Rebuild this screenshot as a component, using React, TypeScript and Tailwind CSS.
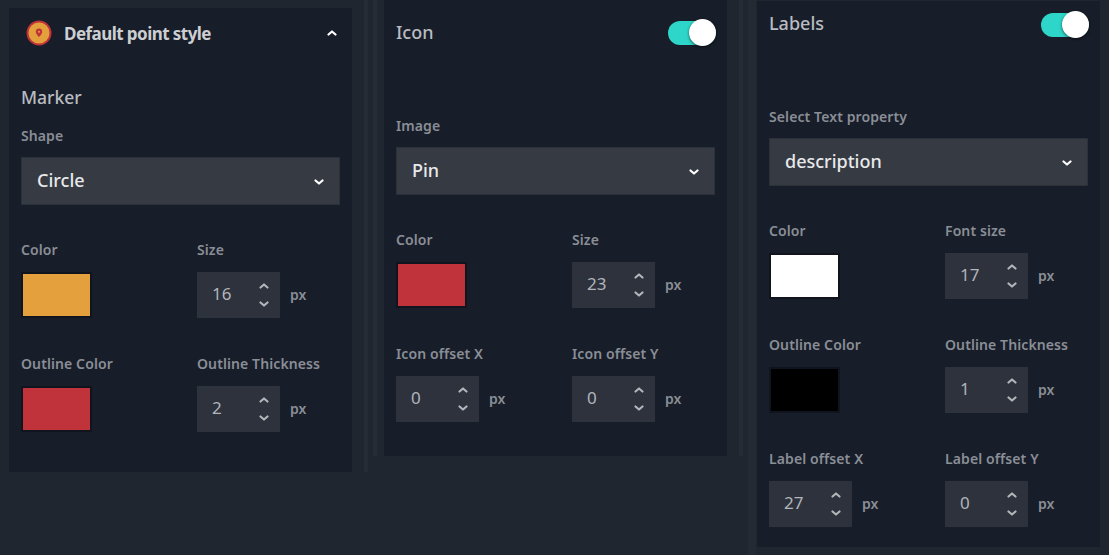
import React from "react";

const F = { fontFamily: '"Noto Sans", "Open Sans", sans-serif' };

function Chevron({ up, className }: { up?: boolean; className?: string }) {
  return (
    <svg viewBox="0 0 10 6" className={className} fill="none" stroke="currentColor" strokeWidth="2.2" strokeLinecap="round" strokeLinejoin="round">
      <path d={up ? "M1.5 4.5 5 1.5l3.5 3" : "M1.5 1.5 5 4.5l3.5-3"} />
    </svg>
  );
}

function Label({ children }: { children: React.ReactNode }) {
  return <div className="text-[14px] leading-[18px] font-semibold text-[#8a8e96] whitespace-nowrap tracking-[0.1px]">{children}</div>;
}

function Select({ value }: { value: string }) {
  return (
    <div className="mt-[12px] h-[48px] flex items-center justify-between pl-[15px] pr-[15px] bg-[#363a43] border border-[#2c3039] text-[#e8e9eb] text-[18px] font-medium">
      <span className="mb-[2px]">{value}</span>
      <Chevron className="w-[10px] h-[6px] mt-[2px] text-white" />
    </div>
  );
}

function Swatch({ color }: { color: string }) {
  return <div className="mt-[13px] w-[71px] h-[46px] border-[2px] border-[#10141e]" style={{ backgroundColor: color }} />;
}

function NumberInput({ value }: { value: string }) {
  return (
    <div className="mt-[13px] flex items-center">
      <div className="w-[83px] h-[46px] bg-[#2d323d] flex items-center justify-between pl-[15px] pr-[11px]">
        <span className="text-[#b2b5ba] text-[17px] mb-[2px]">{value}</span>
        <div className="flex flex-col gap-[12px] text-[#b2b5ba]">
          <Chevron up className="w-[10px] h-[6px]" />
          <Chevron className="w-[10px] h-[6px]" />
        </div>
      </div>
      <span className="ml-[10px] mb-[2px] text-[14px] font-semibold text-[#8a8e96]">px</span>
    </div>
  );
}

function Toggle() {
  return (
    <div className="relative w-[48px] h-[24px] mt-[2px] rounded-full bg-[#2dd6c8]">
      <div className="absolute right-0 top-[-2px] w-[27px] h-[27px] rounded-full bg-white shadow-[0_1px_3px_rgba(0,0,0,0.6)]" />
    </div>
  );
}

function ColorRow({ a, b, left, right }: { a: string; b: string; left: React.ReactNode; right: React.ReactNode }) {
  return (
    <div className="flex">
      <div className="w-[176px]">
        <Label>{a}</Label>
        {left}
      </div>
      <div>
        <Label>{b}</Label>
        {right}
      </div>
    </div>
  );
}

function MarkerIcon() {
  return (
    <svg viewBox="0 0 26 26" className="w-[26px] h-[26px]">
      <circle cx="13" cy="13" r="11.5" fill="#e4a03c" stroke="#c0333a" strokeWidth="2" />
      <path d="M13 8.5a3.2 3.2 0 0 0-3.2 3.2c0 2.3 3.2 5.3 3.2 5.3s3.2-3 3.2-5.3A3.2 3.2 0 0 0 13 8.5z" fill="#c0333a" />
      <circle cx="13" cy="11.7" r="1" fill="#e4a03c" />
    </svg>
  );
}

export default function App() {
  return (
    <div className="w-[1109px] h-[555px] bg-[#1f2630] overflow-hidden flex items-start" style={F}>
      <div className="ml-[9px] mt-[8px] w-[343px] h-[464px] bg-[#171d29] shrink-0">
        <div className="h-[50px] flex items-center pl-[17px] pr-[15px]">
          <MarkerIcon />
          <span className="ml-[12px] mt-[1px] text-[17px] font-bold text-[#ccced2] tracking-[-0.55px]">Default point style</span>
          <Chevron up className="ml-auto w-[10px] h-[6px] text-white" />
        </div>
        <div className="px-[12px] pt-[26px]">
          <div className="text-[17.5px] leading-[26px] font-medium text-[#b9bcc1]">Marker</div>
          <div className="mt-[17px]"><Label>Shape</Label></div>
          <Select value="Circle" />
          <div className="mt-[36px]">
            <ColorRow a="Color" b="Size" left={<Swatch color="#e4a03c" />} right={<NumberInput value="16" />} />
          </div>
          <div className="mt-[37px]">
            <ColorRow a="Outline Color" b="Outline Thickness" left={<Swatch color="#c0333a" />} right={<NumberInput value="2" />} />
          </div>
        </div>
      </div>

      <div className="ml-[12px] w-[4px] h-[472px] bg-[#252c36] shrink-0" />
      <div className="ml-[5px] w-[4px] h-[456px] bg-[#252c36] shrink-0" />

      <div className="ml-[7px] w-[343px] h-[456px] bg-[#171d29] shrink-0">
        <div className="h-[64px] flex items-center justify-between pl-[12px] pr-[11px]">
          <span className="text-[18px] font-medium text-[#b9bcc1]">Icon</span>
          <Toggle />
        </div>
        <div className="px-[12px] pt-[53px]">
          <Label>Image</Label>
          <Select value="Pin" />
          <div className="mt-[36px]">
            <ColorRow a="Color" b="Size" left={<Swatch color="#c0333a" />} right={<NumberInput value="23" />} />
          </div>
          <div className="mt-[37px]">
            <ColorRow a="Icon offset X" b="Icon offset Y" left={<NumberInput value="0" />} right={<NumberInput value="0" />} />
          </div>
        </div>
      </div>

      <div className="ml-[12px] w-[4px] h-[456px] bg-[#252c36] shrink-0" />
      <div className="ml-[5px] w-[8px] h-[555px] bg-[#232a34] shrink-0" />

      <div className="ml-[1px] mt-[1px] w-[343px] h-[546px] bg-[#171d29] shrink-0">
        <div className="h-[45px] flex items-center justify-between pl-[12px] pr-[11px]">
          <span className="text-[18px] font-medium text-[#b9bcc1]">Labels</span>
          <Toggle />
        </div>
        <div className="px-[12px] pt-[62px]">
          <Label>Select Text property</Label>
          <Select value="description" />
          <div className="mt-[36px]">
            <ColorRow a="Color" b="Font size" left={<Swatch color="#ffffff" />} right={<NumberInput value="17" />} />
          </div>
          <div className="mt-[37px]">
            <ColorRow a="Outline Color" b="Outline Thickness" left={<Swatch color="#000000" />} right={<NumberInput value="1" />} />
          </div>
          <div className="mt-[37px]">
            <ColorRow a="Label offset X" b="Label offset Y" left={<NumberInput value="27" />} right={<NumberInput value="0" />} />
          </div>
        </div>
      </div>
    </div>
  );
}
